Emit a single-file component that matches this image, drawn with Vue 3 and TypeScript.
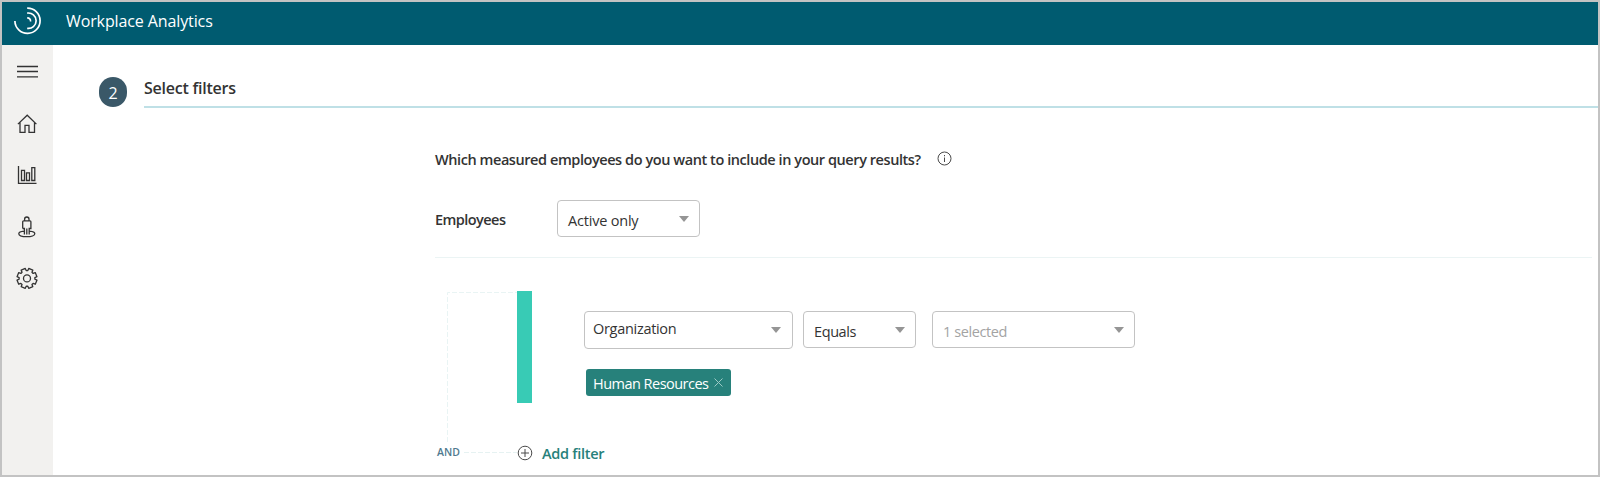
<script setup lang="ts">
import { ref } from 'vue'

interface Rule {
  field: string
  operator: string
  summary: string
  values: string[]
}

const rule = ref<Rule>({
  field: 'Organization',
  operator: 'Equals',
  summary: '1 selected',
  values: ['Human Resources'],
})

const teeth = 8
const gearPath = ((): string => {
  const points: string[] = []
  const step = (Math.PI * 2) / teeth
  const corners: [number, number][] = [[-0.29, 7.9], [-0.22, 10.1], [0.22, 10.1], [0.29, 7.9]]
  for (let i = 0; i < teeth; i++) {
    for (const [offset, radius] of corners) {
      const angle = (i + 0.5) * step + offset
      points.push(`${(11 + radius * Math.cos(angle)).toFixed(2)} ${(11.4 + radius * Math.sin(angle)).toFixed(2)}`)
    }
  }
  return `M${points.join('L')}Z`
})()

function removeValue(value: string): void {
  rule.value.values = rule.value.values.filter((v) => v !== value)
}
</script>

<template>
  <div class="app">
    <header class="topbar">
      <svg class="logo" width="28" height="28" viewBox="0 0 28 28" fill="none" stroke="#fff">
        <path d="M13.200 1.200A12.600 12.600 0 1 1 .9 14" stroke-width="1.7" />
        <path d="M13.2 6.1A7.7 7.7 0 1 1 13.2 21.3" stroke-width="1.7" />
        <path d="M13.2 10.9Q16.6 11 16.6 14.4" stroke-width="1.6" />
      </svg>
      <span class="brand">Workplace Analytics</span>
    </header>
    <div class="body">
      <nav class="sidebar">
        <svg class="nav-icon" width="22" height="22" viewBox="0 0 22 22">
          <path d="M1 5.500h21M1 10.500h21M1 15.800h21" />
        </svg>
        <svg class="nav-icon" width="22" height="22" viewBox="0 0 22 22">
          <path d="M1.900 11.100 11.200 2.200l9.200 8.900M4 9.500v9.800h5v-6.900h4v6.900h5.500V9.500" />
        </svg>
        <svg class="nav-icon" width="22" height="22" viewBox="0 0 22 22">
          <path d="M2.500 2v17.300H20.500M5.500 6.300h3v10.200h-3zM10.500 8.800h3v7.700h-3zM15.800 3.700h3v12.800h-3z" />
        </svg>
        <svg class="nav-icon" width="22" height="22" viewBox="0 0 22 22">
          <path d="M8.600 4.800V3.200a2.200 2.200 0 0 1 4.400 0v1.600M7.600 4.900h6.400a.9.9 0 0 1 .9.9v6.700h-1.700v6M6.700 12.500V5.800a.9.9 0 0 1 .9-.9M6.700 12.500h1.700v6M10.800 12.500v6M8 15.200c-3.200.3-5.200 1.300-5.200 2.500 0 1.700 3.300 3 8 3s8-1.300 8-3c0-1.200-2-2.200-5.200-2.500" />
        </svg>
        <svg class="nav-icon" width="22" height="22" viewBox="0 0 22 22">
          <path :d="gearPath" stroke-linejoin="round" />
          <circle cx="11" cy="11.4" r="3.5" />
        </svg>
      </nav>
      <main class="main">
        <div class="step">
          <span class="step-number">2</span>
          <h1 class="step-title"><span>Select filters</span></h1>
        </div>
        <section class="filters">
          <div class="question">
            <span class="question-text">Which measured employees do you want to include in your query results?</span>
            <svg width="15" height="15" viewBox="0 0 15 15" fill="none" stroke="#4a4a4a">
              <circle cx="7.5" cy="7.5" r="6.5" />
              <path d="M7.500 6.500v4.500M7.500 4v1.300" />
            </svg>
          </div>
          <div class="employees">
            <span class="employees-label">Employees</span>
            <div class="select select-active"><span class="active-text">Active only</span><i class="caret" /></div>
          </div>
          <div class="group">
            <div class="connector">
              <svg width="83" height="152" viewBox="0 0 83 152" fill="none" stroke="#e9f4f4">
                <path d="M12.500 151V1.500H82" stroke-dasharray="5 2" />
              </svg>
            </div>
            <div class="bar" />
            <div class="rule">
              <div class="selects">
                <div class="select select-field"><span class="field-text">{{ rule.field }}</span><i class="caret" /></div>
                <div class="select select-op"><span class="op-text">{{ rule.operator }}</span><i class="caret" /></div>
                <div class="select select-value"><span class="value-text">{{ rule.summary }}</span><i class="caret" /></div>
              </div>
              <div v-for="value in rule.values" :key="value" class="tag">
                <span class="tag-text">{{ value }}</span>
                <svg width="9" height="9" viewBox="0 0 9 9" stroke="#9ccac6" @click="removeValue(value)">
                  <path d="M.5.5l8 8M8.500.5l-8 8" />
                </svg>
              </div>
            </div>
          </div>
          <div class="add">
            <span class="and">AND</span>
            <svg class="dash" width="53" height="2" viewBox="0 0 53 2"><path d="M0 .5h53" stroke="#e6f2f2" stroke-dasharray="5 2" /></svg>
            <svg width="16" height="16" viewBox="0 0 16 16" fill="none" stroke="#4a4a4a">
              <circle cx="8" cy="8" r="6.8" />
              <path d="M4 8h8M8 4v8" />
            </svg>
            <span class="add-text">Add filter</span>
          </div>
        </section>
      </main>
    </div>
  </div>
</template>

<style>
body {
  margin: 0;
  overflow: hidden;
}
</style>

<style scoped>
.app {
  box-sizing: border-box;
  width: 1600px;
  height: 477px;
  border: 2px solid #c3c3c3;
  background: #fff;
  color: #333;
  font-family: 'Open Sans', 'Noto Sans', sans-serif;
  display: flex;
  flex-direction: column;
  white-space: nowrap;
}
.topbar {
  height: 43px;
  flex: none;
  background: #005b70;
  display: flex;
  align-items: flex-start;
}
.logo {
  margin: 5px 0 0 12px;
}
.brand {
  margin-left: 24px;
  color: #fff;
  font-size: 16px;
  line-height: 39px;
  letter-spacing: -0.11px;
}
.body {
  flex: 1;
  display: flex;
  min-height: 0;
}
.sidebar {
  width: 51px;
  box-sizing: border-box;
  padding: 16px 0 0 14px;
  background: #f2f1ef;
  display: flex;
  flex-direction: column;
  gap: 29.5px;
}
.nav-icon {
  fill: none;
  stroke: #333;
  stroke-width: 1.3;
}
.main {
  flex: 1;
}
.step {
  display: flex;
  margin-left: 46px;
  padding-top: 32px;
  height: 31px;
}
.step-number {
  width: 28px;
  height: 30px;
  border-radius: 14px;
  background: #3a5868;
  color: #fff;
  font-size: 16px;
  line-height: 32px;
  text-align: center;
}
.step-title {
  box-sizing: border-box;
  flex: 1;
  height: 31px;
  margin: 0 0 0 17px;
  border-bottom: 2px solid #bfe0e6;
  font-size: 16px;
  font-weight: 600;
  line-height: 22px;
  letter-spacing: -0.24px;
}
.filters {
  margin-left: 382px;
}
.question {
  display: flex;
  align-items: center;
  gap: 16px;
  margin-top: 40px;
  height: 20px;
}
.question-text {
  font-size: 14.5px;
  font-weight: 600;
  line-height: 20px;
  letter-spacing: -0.43px;
  padding-top: 3px;
}
.employees {
  display: flex;
  align-items: center;
  margin-top: 32px;
  height: 37px;
}
.employees-label {
  width: 122px;
  font-size: 14.5px;
  font-weight: 600;
  letter-spacing: -0.55px;
  padding-top: 1px;
}
.select {
  box-sizing: border-box;
  height: 37px;
  border: 1px solid #c3c3c3;
  border-radius: 4px;
  display: flex;
  align-items: center;
  justify-content: space-between;
  padding: 0 10px;
  font-size: 14.5px;
}
.caret {
  width: 0;
  height: 0;
  border: 5px solid transparent;
  border-top: 6px solid #959595;
  border-bottom: 0;
}
.select-active {
  width: 143px;
}
.active-text {
  padding-top: 3px;
  letter-spacing: -0.2px;
}
.group {
  display: flex;
  box-sizing: border-box;
  margin-top: 20px;
  margin-right: 6px;
  padding-top: 33px;
  height: 186px;
  border-top: 1px solid #ebf4f4;
}
.connector {
  width: 82px;
  height: 151px;
}
.bar {
  width: 15px;
  height: 112px;
  background: #38cbb5;
}
.rule {
  margin-left: 52px;
  padding-top: 20px;
}
.selects {
  display: flex;
  align-items: flex-start;
}
.select-field {
  width: 209px;
  height: 38px;
  padding-left: 8px;
  padding-right: 11px;
}
.field-text {
  padding-bottom: 4px;
  letter-spacing: -0.3px;
}
.select-op {
  width: 113px;
  margin-left: 10px;
}
.op-text,
.value-text {
  padding-top: 4px;
  letter-spacing: -0.4px;
}
.select-value {
  width: 203px;
  margin-left: 16px;
}
.value-text {
  color: #a3a3a3;
}
.tag {
  box-sizing: border-box;
  width: 145px;
  height: 27px;
  margin: 20px 0 0 2px;
  padding: 0 8px 0 7px;
  border-radius: 3px;
  background: #27817b;
  color: #fff;
  display: flex;
  align-items: center;
  justify-content: space-between;
}
.tag svg {
  margin-bottom: 1px;
}
.tag-text {
  font-size: 14.5px;
  padding-top: 1px;
  letter-spacing: -0.52px;
}
.add {
  display: flex;
  align-items: center;
  height: 20px;
}
.and {
  width: 29px;
  padding: 0 0 2px 2px;
  box-sizing: border-box;
  color: #4f7a8f;
  font-size: 10.5px;
  font-weight: 600;
}
.add-text {
  margin-left: 9px;
  color: #27817b;
  font-size: 14.5px;
  font-weight: 600;
  letter-spacing: -0.28px;
}
</style>
